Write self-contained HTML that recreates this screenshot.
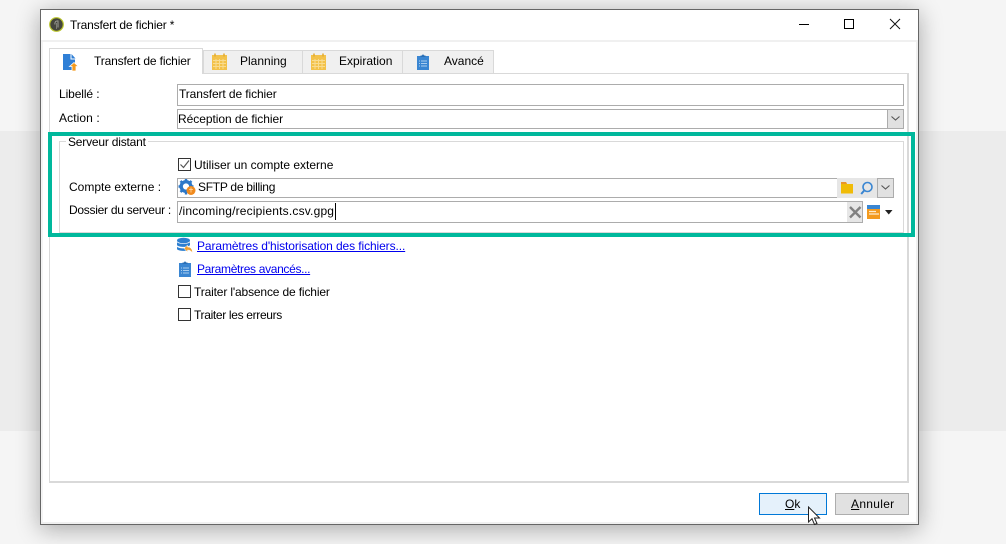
<!DOCTYPE html>
<html lang="fr"><head><meta charset="utf-8"><title>Transfert de fichier</title>
<style>
html,body{margin:0;padding:0;width:1006px;height:544px;overflow:hidden;background:#f5f5f5}
*{box-sizing:border-box}
body{position:relative;font-family:"Liberation Sans",sans-serif;font-size:12px;color:#000}
.a{position:absolute}
.t{position:absolute;white-space:nowrap;line-height:14px;font-size:12px}
.inp{position:absolute;background:#fff;border:1px solid #acacac}
.tab{position:absolute;top:50px;height:23px;background:#f0f0f0;border:1px solid #d9d9d9;border-bottom:none}
.cb{position:absolute;width:13px;height:13px;border:1px solid #333;background:#fff}
a{color:#00e;text-decoration:underline}
svg{position:absolute;display:block}
u{text-decoration:underline}
</style></head><body>
<div class="a" style="left:0;top:131px;width:1006px;height:300px;background:#ececec"></div>
<!-- window -->
<div class="a" style="left:40px;top:9px;width:879px;height:516px;background:#fff;border:1px solid #666;box-shadow:0 4px 22px rgba(0,0,0,.32)"></div>
<div class="a" style="left:41px;top:40px;width:877px;height:2px;background:#f0f0f0"></div>
<div class="a" style="left:41px;top:42px;width:2px;height:480px;background:#f4f4f4"></div>
<div class="a" style="left:916px;top:42px;width:2px;height:480px;background:#f0f0f0"></div>
<div class="a" style="left:41px;top:522px;width:877px;height:2px;background:#f0f0f0"></div>
<!-- title -->
<svg style="left:49px;top:17px" width="16" height="16" viewBox="0 0 16 16"><circle cx="7.500" cy="7.500" r="6.800" fill="#45453d" stroke="#b9c42c" stroke-width="1.200"/><path d="M9 3.500v7M9 4C6.500 3.700 5.500 5.500 6 7.500" fill="none" stroke="#a8a8a0" stroke-width=".9"/><path d="M7.500 6v6" stroke="#8a8a82" stroke-width=".8"/></svg>
<div class="t" style="left:70px;top:18px;letter-spacing:-.15px">Transfert de fichier *</div>
<svg style="left:799px;top:17px" width="110" height="16" viewBox="0 0 110 16"><path d="M0 7.500h10" stroke="#000"/><rect x="45.500" y="2.500" width="9" height="9" fill="none" stroke="#000" stroke-width="1"/><path d="M91 2l10 10M101 2l-10 10" stroke="#111" stroke-width="1"/></svg>
<!-- panel -->
<div class="a" style="left:49px;top:73px;width:860px;height:410px;background:#fff;border:1px solid #d9d9d9;border-right-width:2px;border-bottom-width:2px"></div>
<!-- tabs -->
<div class="tab" style="left:203px;width:100px"></div>
<div class="tab" style="left:302px;width:101px"></div>
<div class="tab" style="left:402px;width:92px"></div>
<div class="a" style="left:49px;top:48px;width:154px;height:26px;background:#fff;border:1px solid #d9d9d9;border-bottom:none"></div>
<svg style="left:62px;top:53px" width="17" height="18" viewBox="0 0 17 18"><path d="M1 1h7.500v5.500H13V17H1z" fill="#2f7fd6"/><path d="M9.500 1l4 4.500h-4z" fill="#2f7fd6"/><path d="M12 9.500l4.500 4H14V18h-4v-4.500H7.500z" fill="#f39a1e" stroke="#fff" stroke-width=".8"/></svg>
<div class="t" style="left:94px;top:54px;letter-spacing:-.15px">Transfert de fichier</div>
<svg style="left:211px;top:53px" width="17" height="18" viewBox="0 0 17 18"><rect x="1" y="2" width="15" height="15" fill="#f3c24a"/><path d="M4 .5v3M13 .5v3" stroke="#e2a92e" stroke-width="1.500"/><path d="M2 7.500h13M2 10.500h13M2 13.500h13M5 6v10M8.500 6v10M12 6v10" stroke="#f9dc90" stroke-width="1"/></svg>
<div class="t" style="left:240px;top:54px">Planning</div>
<svg style="left:310px;top:53px" width="17" height="18" viewBox="0 0 17 18"><rect x="1" y="2" width="15" height="15" fill="#f3c24a"/><path d="M4 .5v3M13 .5v3" stroke="#e2a92e" stroke-width="1.500"/><path d="M2 7.500h13M2 10.500h13M2 13.500h13M5 6v10M8.500 6v10M12 6v10" stroke="#f9dc90" stroke-width="1"/></svg>
<div class="t" style="left:339px;top:54px">Expiration</div>
<svg style="left:416px;top:53px" width="14" height="18" viewBox="0 0 14 18"><rect x="1" y="3" width="12" height="14" fill="#3a86d2"/><path d="M4.500 4V2.500h1.500a1 1 0 012 0h1.500V4z" fill="#2a6fb5"/><path d="M3 8h1M5 8h6M3 10.500h1M5 10.500h6M3 13h1M5 13h6" stroke="#a9cdee"/></svg>
<div class="t" style="left:444px;top:54px">Avancé</div>
<!-- form -->
<div class="t" style="left:59px;top:87px;letter-spacing:-.1px">Libellé :</div>
<div class="inp" style="left:177px;top:84px;width:727px;height:22px"></div>
<div class="t" style="left:179px;top:87px;letter-spacing:-.1px">Transfert de fichier</div>
<div class="t" style="left:59px;top:111px;letter-spacing:.1px">Action :</div>
<div class="inp" style="left:177px;top:109px;width:727px;height:20px"></div>
<div class="a" style="left:887px;top:109px;width:17px;height:20px;background:#e1e1e1;border:1px solid #acacac"></div>
<svg style="left:890px;top:115px" width="11" height="7" viewBox="0 0 11 7"><path d="M1.500 1.500l4 3.500 4-3.500" fill="none" stroke="#555" stroke-width="1.100"/></svg>
<div class="t" style="left:178px;top:112px;letter-spacing:-.05px">Réception de fichier</div>
<!-- group -->
<div class="a" style="left:59px;top:141px;width:845px;height:92px;border:1px solid #d9d9d9"></div>
<div class="a" style="left:66px;top:136px;width:82px;height:12px;background:#fff"></div>
<div class="t" style="left:68px;top:135px;letter-spacing:-.2px">Serveur distant</div>
<div class="cb" style="left:178px;top:158px"></div>
<svg style="left:179px;top:159px" width="11" height="11" viewBox="0 0 11 11"><path d="M1.500 5.500l3 3 5.500-7" fill="none" stroke="#555" stroke-width="1.200"/></svg>
<div class="t" style="left:194px;top:158px">Utiliser un compte externe</div>
<div class="t" style="left:69px;top:180px">Compte externe :</div>
<div class="inp" style="left:177px;top:178px;width:661px;height:20px"></div>
<svg style="left:178px;top:178px" width="18" height="18" viewBox="0 0 18 18"><circle cx="8" cy="8.500" r="4.800" fill="none" stroke="#2d78c8" stroke-width="3.400"/><path d="M8 1v3M8 13v3.500M.5 8.500h3M12.500 8.500h3M2.500 3l2 2M11.500 12l2 2M13.500 3l-2 2M2.500 14l2-2" stroke="#2d78c8" stroke-width="2.400"/><circle cx="13" cy="12.500" r="4.500" fill="#f08a1d"/><path d="M11 11.500h4M13 9.500v5" stroke="#ffd9a8" stroke-width=".8"/></svg>
<div class="t" style="left:198px;top:180px;letter-spacing:-.27px">SFTP de billing</div>
<div class="a" style="left:837px;top:178px;width:40px;height:20px;background:#e6e6e6"></div>
<svg style="left:840px;top:180px" width="34" height="15" viewBox="0 0 34 15"><path d="M1 2h5l1 2h6v9.500H1z" fill="#f0bb07"/><path d="M1 2h5l1 2H1z" fill="#e9952a"/><circle cx="27.500" cy="7" r="4.500" fill="none" stroke="#3a86d2" stroke-width="1.600"/><path d="M24.200 10.500L21.200 14" stroke="#3a86d2" stroke-width="2"/></svg>
<div class="a" style="left:877px;top:178px;width:17px;height:20px;background:#e1e1e1;border:1px solid #acacac"></div>
<svg style="left:880px;top:184px" width="11" height="7" viewBox="0 0 11 7"><path d="M1.500 1.500l4 3.500 4-3.500" fill="none" stroke="#555" stroke-width="1.100"/></svg>
<div class="t" style="left:69px;top:203px;letter-spacing:-.27px">Dossier du serveur :</div>
<div class="inp" style="left:177px;top:201px;width:686px;height:22px"></div>
<div class="t" style="left:179px;top:204px;letter-spacing:.19px">/incoming/recipients.csv.gpg</div>
<div class="a" style="left:335px;top:203px;width:1px;height:17px;background:#000"></div>
<div class="a" style="left:847px;top:202px;width:15px;height:20px;background:#e6e6e6"></div>
<svg style="left:848px;top:205px" width="14" height="14" viewBox="0 0 14 14"><path d="M2 2l10.500 10.500M12.500 2L2 12.500" stroke="#808080" stroke-width="2.400"/></svg>
<svg style="left:866px;top:204px" width="14" height="15" viewBox="0 0 14 15"><rect x="1" y="1" width="13" height="4" fill="#3a86d2"/><rect x="1" y="5" width="13" height="10" fill="#f39a1e"/><path d="M3 7.500h7M3 10h10" stroke="#fdeccf" stroke-width="1.200"/></svg>
<svg style="left:885px;top:210px" width="8" height="5" viewBox="0 0 8 5"><path d="M0 0h7.500L3.750 4.500z" fill="#222"/></svg>
<!-- teal highlight -->
<div class="a" style="left:48px;top:132px;width:867px;height:105px;border:4px solid #00b89c"></div>
<!-- links -->
<svg style="left:176px;top:237px" width="17" height="17" viewBox="0 0 17 17"><ellipse cx="7.500" cy="3.500" rx="6.500" ry="2.800" fill="#2d7fd0"/><path d="M1 5c1 2.500 12 2.500 13 0v3c-1 2.500-12 2.500-13 0zM1 9.500c1 2.500 12 2.500 13 0v2.500c-1 2.500-12 2.500-13 0z" fill="#2d7fd0"/><path d="M8 11.500l3.500-3.500v2c3 0 5 2 5 6-1-2-3-3-5-3v2z" fill="#f0a030" stroke="#fff" stroke-width=".5"/></svg>
<a class="t" style="left:197px;top:239px;letter-spacing:-.1px">Paramètres d'historisation des fichiers...</a>
<svg style="left:178px;top:260px" width="14" height="18" viewBox="0 0 14 18"><rect x="1" y="3" width="12" height="14" fill="#3a86d2"/><path d="M4.500 4V2.500h1.500a1 1 0 012 0h1.500V4z" fill="#2a6fb5"/><path d="M3 8h1M5 8h6M3 10.500h1M5 10.500h6M3 13h1M5 13h6" stroke="#a9cdee"/></svg>
<a class="t" style="left:197px;top:262px;letter-spacing:-.33px">Paramètres avancés...</a>
<div class="cb" style="left:178px;top:285px"></div>
<div class="t" style="left:194px;top:285px;letter-spacing:-.15px">Traiter l'absence de fichier</div>
<div class="cb" style="left:178px;top:308px"></div>
<div class="t" style="left:194px;top:308px;letter-spacing:-.33px">Traiter les erreurs</div>
<!-- buttons -->
<div class="a" style="left:759px;top:493px;width:68px;height:22px;background:#e5f1fb;border:1px solid #0078d7"></div>
<div class="t" style="left:785px;top:497px"><u>O</u>k</div>
<div class="a" style="left:835px;top:493px;width:74px;height:22px;background:#e1e1e1;border:1px solid #adadad"></div>
<div class="t" style="left:851px;top:497px;letter-spacing:.3px"><u>A</u>nnuler</div>
<svg style="left:807px;top:506px" width="14" height="20" viewBox="0 0 14 20"><path d="M1.500 1v15l3.500-3.300 2.500 5.800 2.500-1-2.500-5.500h5z" fill="#fff" stroke="#222" stroke-width="1"/></svg>
</body></html>
